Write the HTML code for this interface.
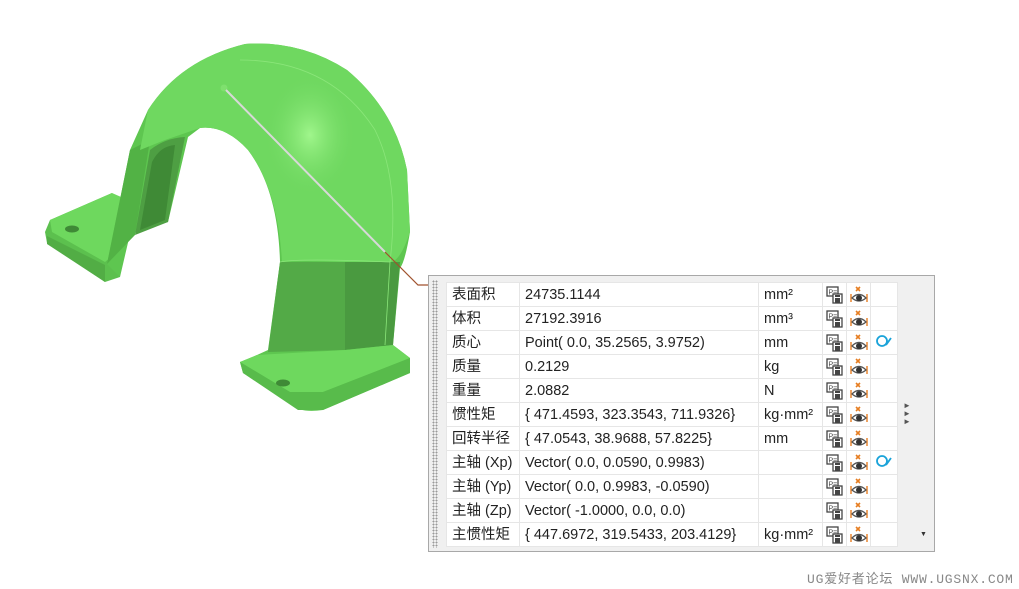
<!DOCTYPE html>
<html><head><meta charset="utf-8">
<style>
body{margin:0;width:1019px;height:589px;background:#fff;position:relative;overflow:hidden;font-family:"Liberation Sans","Noto Sans CJK SC",sans-serif}
#panel{position:absolute;left:428px;top:275px;width:507px;height:277px;background:#f0f0f0;border:1px solid #a8a8a8;box-sizing:border-box}
#grip{position:absolute;left:3px;top:4px;width:6px;height:268px;background-image:radial-gradient(#9a9a9a 0.8px,transparent 1px);background-size:3px 3px}
table{position:absolute;left:17px;top:6px;border-collapse:collapse;background:#fff;table-layout:fixed;border:1px solid #dcdcdc}
tr{height:24px}
td{height:23px;border:1px solid #e6e6e6;font-size:14.5px;line-height:16px;color:#222;padding:0 0 0 5px;white-space:nowrap;overflow:hidden;font-family:"Liberation Sans","Noto Sans CJK SC",sans-serif}
td.i{padding:0;text-align:center;vertical-align:middle;line-height:0}
#wm{position:absolute;left:807px;top:568px;font-family:"Liberation Mono","Noto Sans CJK SC",monospace;font-size:13px;color:#888;letter-spacing:0.8px}
</style></head><body>
<svg width="1019" height="589" style="position:absolute;left:0;top:0">
<defs>
<radialGradient id="hl" cx="0.5" cy="0.5" r="0.5"><stop offset="0" stop-color="#a0f68c"/><stop offset="1" stop-color="#72d862" stop-opacity="0"/></radialGradient>
<symbol id="sv" viewBox="0 0 18 18"><rect x="1" y="1" width="11" height="9" fill="#fff" stroke="#444" stroke-width="1.3"/><text x="2.5" y="8.5" font-size="7" font-family="Liberation Sans" fill="#444">P=</text><rect x="7" y="8" width="9" height="9" fill="#fff" stroke="#444" stroke-width="1.3"/><rect x="9" y="12" width="5" height="5" fill="#444"/><rect x="9" y="9" width="5" height="2" fill="#444"/></symbol>
<symbol id="ey" viewBox="0 0 18 18"><path d="M6 1 L10 5 M10 1 L6 5" stroke="#e67e22" stroke-width="1.6"/><path d="M1 8 V16 M17 8 V16" stroke="#e67e22" stroke-width="1.4"/><path d="M2 12 Q9 5 16 12 Q9 18 2 12 Z" fill="#fff" stroke="#555" stroke-width="1.3"/><circle cx="9" cy="12" r="3" fill="#333"/></symbol>
<symbol id="mg" viewBox="0 0 18 18"><circle cx="7" cy="7" r="5" fill="none" stroke="#1aa3d9" stroke-width="1.8"/><path d="M11 11 L16 4" stroke="#1aa3d9" stroke-width="1.8"/></symbol>
</defs>
<polygon points="45,232 50,220 112,193 122,205 120,277 105,282 47,243" fill="#5cc04e"/>
<polygon points="50,220 112,193 128,200 125,245 105,262 52,232" fill="#6ed85e"/>
<polygon points="47,236 105,265 105,282 47,244" fill="#52ad45"/>
<ellipse cx="72" cy="229" rx="7" ry="3.5" fill="#3f8a36"/>
<path d="M130,150 L148,110 Q180,60 245,44 Q300,40 347,70 Q395,110 407,170 L410,232 Q405,262 400,268 L393,345 L410,358 L410,373 L323,410 Q300,413 292,405 L243,373 L240,362 L257,355 L268,350 L280,262 Q278,190 248,150 Q225,125 200,128 L188,137 L168,222 L130,234 L120,277 L107,264 Z" fill="#5ec650"/>
<path d="M107,264 L130,150 L150,140 L135,235 Z" fill="#52b245"/>
<path d="M135,235 L150,150 Q165,138 185,137 L168,222 Z" fill="#4e9f43"/>
<path d="M140,230 L152,162 Q160,146 175,145 L165,220 Z" fill="#3f8a36"/>
<path d="M148,110 Q180,60 245,44 Q300,40 347,70 Q395,110 407,170 L410,232 Q400,262 390,262 L345,262 Q300,260 282,262 Q278,190 248,150 Q225,125 200,128 L165,140 L140,150 Z" fill="#6fd860"/>
<ellipse cx="310" cy="135" rx="45" ry="60" fill="url(#hl)"/>
<path d="M280,262 L345,262 L345,350 L268,352 Z" fill="#53aa47"/>
<path d="M345,262 L400,262 L393,345 L345,350 Z" fill="#4a9a40"/>
<polygon points="240,362 257,355 345,350 393,345 410,358 323,392 290,392" fill="#6ed85e"/>
<polygon points="243,373 240,362 290,392 323,392 410,358 410,373 323,410 298,410" fill="#58bb4b"/>
<ellipse cx="283" cy="383" rx="7" ry="3.5" fill="#3f8a36"/>
<path d="M240,60 Q330,60 375,130 Q400,180 390,262 L385,345" stroke="#8be67a" stroke-width="0.8" fill="none"/>
<path d="M280,262 Q300,258 390,262" stroke="#8be67a" stroke-width="0.8" fill="none"/>
<circle cx="224" cy="88" r="3.5" fill="#7fe06e"/>
<line x1="226" y1="90" x2="385" y2="252" stroke="#d8d8d8" stroke-width="2"/>
<polyline points="385,252 418,285 428,285" stroke="#a0522d" stroke-width="1.2" fill="none"/>
</svg>
<div id="panel"><div id="grip"></div>
<table>
<colgroup><col style="width:73px"><col style="width:239px"><col style="width:64px"><col style="width:24px"><col style="width:24px"><col style="width:27px"></colgroup>
<tr><td>表面积</td><td>24735.1144</td><td>mm²</td><td class="i"><svg width="18" height="18"><use href="#sv"/></svg></td><td class="i"><svg width="18" height="18"><use href="#ey"/></svg></td><td class="i"></td></tr>
<tr><td>体积</td><td>27192.3916</td><td>mm³</td><td class="i"><svg width="18" height="18"><use href="#sv"/></svg></td><td class="i"><svg width="18" height="18"><use href="#ey"/></svg></td><td class="i"></td></tr>
<tr><td>质心</td><td>Point( 0.0, 35.2565, 3.9752)</td><td>mm</td><td class="i"><svg width="18" height="18"><use href="#sv"/></svg></td><td class="i"><svg width="18" height="18"><use href="#ey"/></svg></td><td class="i"><svg width="18" height="18"><use href="#mg"/></svg></td></tr>
<tr><td>质量</td><td>0.2129</td><td>kg</td><td class="i"><svg width="18" height="18"><use href="#sv"/></svg></td><td class="i"><svg width="18" height="18"><use href="#ey"/></svg></td><td class="i"></td></tr>
<tr><td>重量</td><td>2.0882</td><td>N</td><td class="i"><svg width="18" height="18"><use href="#sv"/></svg></td><td class="i"><svg width="18" height="18"><use href="#ey"/></svg></td><td class="i"></td></tr>
<tr><td>惯性矩</td><td>{ 471.4593, 323.3543, 711.9326}</td><td>kg·mm²</td><td class="i"><svg width="18" height="18"><use href="#sv"/></svg></td><td class="i"><svg width="18" height="18"><use href="#ey"/></svg></td><td class="i"></td></tr>
<tr><td>回转半径</td><td>{ 47.0543, 38.9688, 57.8225}</td><td>mm</td><td class="i"><svg width="18" height="18"><use href="#sv"/></svg></td><td class="i"><svg width="18" height="18"><use href="#ey"/></svg></td><td class="i"></td></tr>
<tr><td>主轴 (Xp)</td><td>Vector( 0.0, 0.0590, 0.9983)</td><td></td><td class="i"><svg width="18" height="18"><use href="#sv"/></svg></td><td class="i"><svg width="18" height="18"><use href="#ey"/></svg></td><td class="i"><svg width="18" height="18"><use href="#mg"/></svg></td></tr>
<tr><td>主轴 (Yp)</td><td>Vector( 0.0, 0.9983, -0.0590)</td><td></td><td class="i"><svg width="18" height="18"><use href="#sv"/></svg></td><td class="i"><svg width="18" height="18"><use href="#ey"/></svg></td><td class="i"></td></tr>
<tr><td>主轴 (Zp)</td><td>Vector( -1.0000, 0.0, 0.0)</td><td></td><td class="i"><svg width="18" height="18"><use href="#sv"/></svg></td><td class="i"><svg width="18" height="18"><use href="#ey"/></svg></td><td class="i"></td></tr>
<tr><td>主惯性矩</td><td>{ 447.6972, 319.5433, 203.4129}</td><td>kg·mm²</td><td class="i"><svg width="18" height="18"><use href="#sv"/></svg></td><td class="i"><svg width="18" height="18"><use href="#ey"/></svg></td><td class="i"></td></tr>
</table>
<div style="position:absolute;left:474px;top:126px;font-size:8px;line-height:8px;color:#555">►<br>►<br>►</div>
<div style="position:absolute;left:491px;top:255px;font-size:7px;color:#333">▼</div>
</div>
<div id="wm">UG爱好者论坛 WWW.UGSNX.COM</div>
</body></html>
